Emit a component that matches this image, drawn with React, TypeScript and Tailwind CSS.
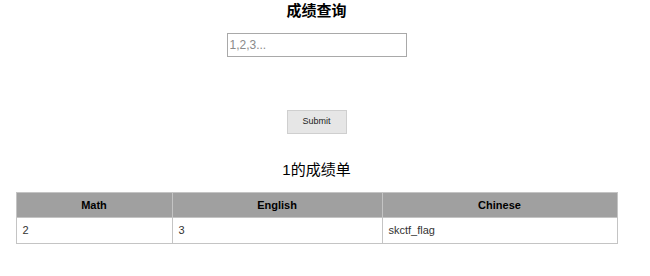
import React from "react";

const rows = [{ math: "2", english: "3", chinese: "skctf_flag" }];

const App = () => {
  return (
    <div className="w-[633px] h-[276px] bg-white font-['Liberation_Sans','Noto_Sans_CJK_SC',sans-serif] text-black">
      <h1 className="pt-[2px] text-center text-[15px] leading-[18px] font-bold">
        成绩查询
      </h1>
      <div className="mt-[13px] flex justify-center">
        <input
          type="text"
          placeholder="1,2,3..."
          className="w-[180px] h-[24px] border border-[#a9a9a9] px-[2px] text-[12px] text-black placeholder:text-[#8a8a8a] outline-none"
        />
      </div>
      <div className="mt-[53px] flex justify-center">
        <button className="w-[60px] h-[24px] border border-[#cfcfcf] bg-[#e6e6e6] text-[9px] text-[#222]">
          Submit
        </button>
      </div>
      <h2 className="mt-[27px] text-center text-[15px] leading-[18px]">
        1的成绩单
      </h2>
      <table className="mt-[13px] mx-auto w-[602px] border-collapse text-[11px]">
        <thead>
          <tr className="bg-[#a0a0a0] h-[25px]">
            <th className="w-[156px] border border-[#c4c4c4] font-bold">Math</th>
            <th className="w-[210px] border border-[#c4c4c4] font-bold">English</th>
            <th className="border border-[#c4c4c4] font-bold">Chinese</th>
          </tr>
        </thead>
        <tbody>
          {rows.map((r, i) => (
            <tr key={i} className="h-[26px]">
              <td className="border border-[#c4c4c4] px-[6px] text-[#333]">{r.math}</td>
              <td className="border border-[#c4c4c4] px-[6px] text-[#333]">{r.english}</td>
              <td className="border border-[#c4c4c4] px-[6px] text-[#333]">{r.chinese}</td>
            </tr>
          ))}
        </tbody>
      </table>
    </div>
  );
};

export default App;
